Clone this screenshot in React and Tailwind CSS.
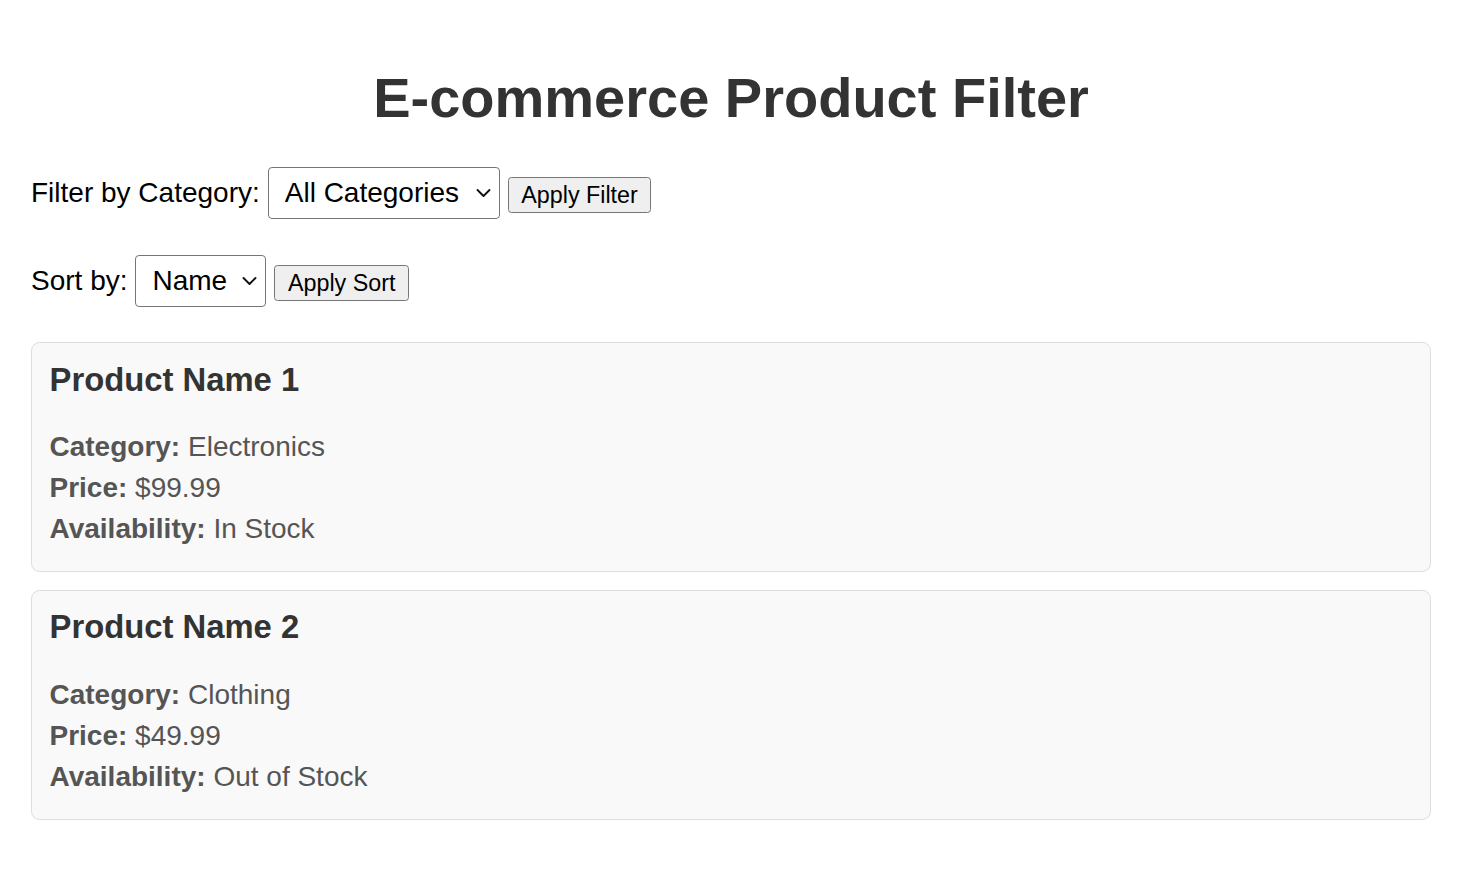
import React, { useState } from 'react';

const products = [
  { id: 1, name: 'Product Name 1', category: 'Electronics', price: '$99.99', availability: 'In Stock' },
  { id: 2, name: 'Product Name 2', category: 'Clothing', price: '$49.99', availability: 'Out of Stock' },
];

const Chevron = () => (
  <svg
    className="pointer-events-none absolute right-[9px] top-1/2 -translate-y-1/2"
    width="15"
    height="9"
    viewBox="0 0 15 9"
    fill="none"
  >
    <path d="M1.5 1.5 7.5 7.5 13.5 1.5" stroke="#111" strokeWidth="1.9" strokeLinecap="round" strokeLinejoin="round" />
  </svg>
);

const Select = ({ value, onChange, options, width }) => (
  <div className="relative">
    <select
      value={value}
      onChange={(e) => onChange(e.target.value)}
      className={`${width} h-[52px] appearance-none rounded-[4px] border border-[#767676] bg-white pl-[16px] text-[28px] text-black outline-none`}
    >
      {options.map((o) => (
        <option key={o}>{o}</option>
      ))}
    </select>
    <Chevron />
  </div>
);

const Button = ({ children }) => (
  <button className="mt-[4px] h-[36px] rounded-[3.5px] border border-[#767676] bg-[#efefef] px-[12.5px] text-[23.3px] leading-[26px] text-black">
    {children}
  </button>
);

const App = () => {
  const [category, setCategory] = useState('All Categories');
  const [sort, setSort] = useState('Name');

  return (
    <div className="min-h-screen bg-white pl-[31px] pr-[33px] pt-[66px] font-['Liberation_Sans',Arial,sans-serif]">
      <h1 className="text-center text-[56px] font-bold leading-[64px] text-[#333]">E-commerce Product Filter</h1>

      {/* Filter row */}
      <div className="mt-[37px] flex items-center gap-[8px]">
        <label className="text-[28px] leading-[32px] text-black">Filter by Category:</label>
        <Select
          value={category}
          onChange={setCategory}
          options={['All Categories', 'Electronics', 'Clothing']}
          width="w-[232px]"
        />
        <Button>Apply Filter</Button>
      </div>

      {/* Sort row */}
      <div className="mt-[36px] flex items-center gap-[8px]">
        <label className="text-[28px] leading-[32px] text-black">Sort by:</label>
        <Select value={sort} onChange={setSort} options={['Name', 'Price']} width="w-[131px]" />
        <Button>Apply Sort</Button>
      </div>

      {/* Products */}
      <div className="mt-[35px] flex flex-col gap-[18px]">
        {products.map((p) => (
          <div
            key={p.id}
            className="rounded-[8.75px] border border-[#dddddd] bg-[#f9f9f9] px-[17.5px] pb-[25.7px] pt-[17.5px]"
          >
            <h3 className="text-[32.8px] font-bold leading-[38px] text-[#333]">{p.name}</h3>
            <div className="mt-[32.7px] flex flex-col gap-[9px] text-[28px] leading-[32px] text-[#555]">
              <p><span className="font-bold">Category:</span> {p.category}</p>
              <p><span className="font-bold">Price:</span> {p.price}</p>
              <p><span className="font-bold">Availability:</span> {p.availability}</p>
            </div>
          </div>
        ))}
      </div>
    </div>
  );
};

export default App;
